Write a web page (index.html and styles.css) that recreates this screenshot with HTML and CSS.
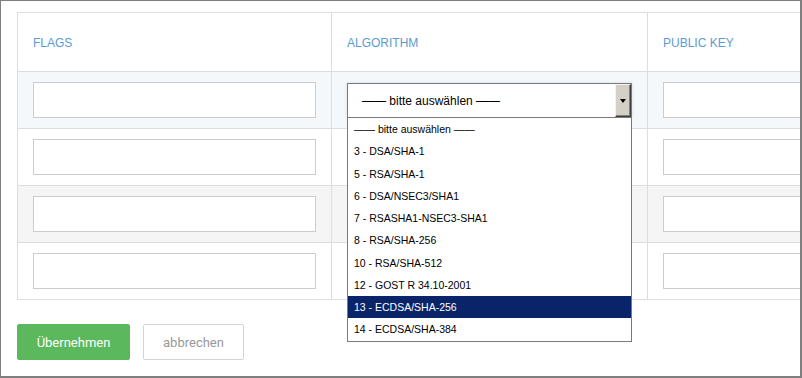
FILE: index.html
```html
<!DOCTYPE html>
<html>
<head>
<meta charset="utf-8">
<link rel="stylesheet" href="styles.css">
</head>
<body>
<div class="window">
  <div class="grid">
    <div class="row head">
      <div class="cell">FLAGS</div>
      <div class="cell">ALGORITHM</div>
      <div class="cell">PUBLIC KEY</div>
    </div>
    <div class="row hover">
      <div class="cell"><div class="input"></div></div>
      <div class="cell">
        <div class="select">
          <span class="select-text">—— bitte auswählen ——</span>
          <span class="select-btn"><span class="arrow"></span></span>
          <ul class="dropdown">
            <li>—— bitte auswählen ——</li>
            <li>3 - DSA/SHA-1</li>
            <li>5 - RSA/SHA-1</li>
            <li>6 - DSA/NSEC3/SHA1</li>
            <li>7 - RSASHA1-NSEC3-SHA1</li>
            <li>8 - RSA/SHA-256</li>
            <li>10 - RSA/SHA-512</li>
            <li>12 - GOST R 34.10-2001</li>
            <li class="selected">13 - ECDSA/SHA-256</li>
            <li>14 - ECDSA/SHA-384</li>
          </ul>
        </div>
      </div>
      <div class="cell"><div class="input"></div></div>
    </div>
    <div class="row">
      <div class="cell"><div class="input"></div></div>
      <div class="cell"></div>
      <div class="cell"><div class="input"></div></div>
    </div>
    <div class="row striped">
      <div class="cell"><div class="input"></div></div>
      <div class="cell"></div>
      <div class="cell"><div class="input"></div></div>
    </div>
    <div class="row last">
      <div class="cell"><div class="input"></div></div>
      <div class="cell"></div>
      <div class="cell"><div class="input"></div></div>
    </div>
  </div>
  <div class="actions">
    <button class="btn btn-primary">Übernehmen</button>
    <button class="btn btn-default">abbrechen</button>
  </div>
</div>
</body>
</html>
```

FILE: styles.css
```css
* { box-sizing: border-box; }
html, body { margin: 0; padding: 0; background: #fff; }
body { font-family: "Liberation Sans", Arial, sans-serif; }

.window {
  width: 802px;
  height: 378px;
  border-style: solid;
  border-color: #7f7f7f;
  border-width: 1px 2px 2px 1px;
  overflow: hidden;
  padding: 11px 0 0 16px;
}

.grid {
  width: 946px;
  border-right: 1px solid #ddd;
  border-bottom: 1px solid #ddd;
}

.row {
  display: grid;
  grid-template-columns: 314px 316px 316px;
  background: #fff;
}
.row.hover { background: #f5f8fb; }
.row.striped { background: #f5f5f5; }

.cell {
  border-left: 1px solid #ddd;
  border-top: 1px solid #ddd;
  padding: 10px 15px;
  height: 57px;
}

.head .cell {
  height: 59px;
  display: flex;
  align-items: center;
  padding: 0 15px;
  font-size: 12px;
  color: #5b9bd5;
  padding-top: 1px;
}

.input {
  height: 36px;
  border: 1px solid #cccccc;
  background: #fff;
}

.select {
  position: relative;
  margin-top: 1px;
  height: 35px;
  border: 1px solid #7a7a7a;
  background: #fff;
  box-shadow: 0 0 3px rgba(0, 0, 0, 0.12);
  display: flex;
  align-items: center;
  padding-left: 14px;
  font-size: 12px;
  color: #000;
  z-index: 2;
}

.select-btn {
  position: absolute;
  right: 0;
  top: 0;
  bottom: 0;
  width: 16px;
  background: #d4d0c8;
  border-style: solid;
  border-width: 1px;
  border-color: #f4f3ef #404040 #404040 #f4f3ef;
  box-shadow: inset -1px -1px 0 #808080;
  display: flex;
  align-items: center;
  justify-content: center;
}

.arrow {
  width: 0;
  height: 0;
  border-left: 3.5px solid transparent;
  border-right: 3.5px solid transparent;
  border-top: 4px solid #000;
  margin-left: -1px;
}

.dropdown {
  position: absolute;
  left: -1px;
  right: -1px;
  top: 33px;
  margin: 0;
  padding: 0;
  list-style: none;
  background: #fff;
  border: 1px solid #7a7a7a;
  font-size: 10.5px;
  color: #000;
}

.dropdown li {
  height: 22.25px;
  line-height: 22.25px;
  padding-left: 6px;
  white-space: nowrap;
}

.dropdown li.selected {
  background: #0a246a;
  color: #fff;
}

.actions {
  display: flex;
  gap: 13px;
  margin-top: 24px;
}

.btn {
  height: 36px;
  font-family: Roboto, "Liberation Sans", sans-serif;
  font-size: 13px;
  border-radius: 2px;
  cursor: pointer;
  padding: 0;
}

.btn-primary {
  width: 113px;
  background: #5cb85c;
  border: 1px solid #5cb85c;
  color: #fff;
}

.btn-default {
  width: 101px;
  background: #fff;
  border: 1px solid #d4d4d4;
  color: #999;
}
```
